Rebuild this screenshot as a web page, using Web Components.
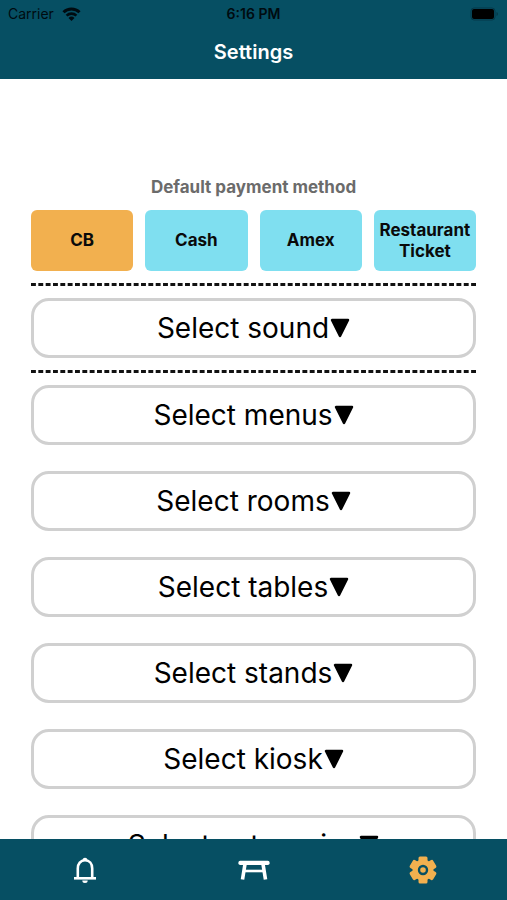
<!DOCTYPE html>
<html lang="en">
<head>
<meta charset="utf-8">
<meta name="viewport" content="width=device-width, initial-scale=1">
<title>Settings</title>
<style>
  html, body {
    height: 100%;
    margin: 0;
  }

  body {
    font-family: Inter, "Liberation Sans", sans-serif;
    color: #0a0a0a;
    background-color: #fff;
    --bar: #064f63;
    --accent: #f2b04f;
    --tile: #7fdff0;
  }
</style>
</head>
<body>
<settings-app></settings-app>

<script>
class StatusBar extends HTMLElement {
  constructor() {
    super();
    this.attachShadow({ mode: 'open' });
    this.shadowRoot.innerHTML = `
      <style>
        :host {
          display: grid;
          grid-template-columns: 1fr auto 1fr;
          align-items: center;
          height: 27px;
          padding: 0 8px;
          font-size: 14px;
          color: #000b10;
        }

        .carrier {
          display: flex;
          align-items: center;
          gap: 8px;
        }

        .time {
          font-weight: 600;
        }

        .battery {
          justify-self: end;
        }

        svg {
          display: block;
        }
      </style>
      <div class="carrier">
        <span>Carrier</span>
        <svg width="19" height="14" viewBox="0 0 19 14" fill="none" stroke="currentColor" stroke-width="3" aria-hidden="true">
          <path d="M1.5 5.2a11.3 11.3 0 0 1 16 0"/>
          <path d="M4.6 8.6a7 7 0 0 1 9.8 0" stroke-width="2.6"/>
          <path d="M9.5 14L6.5 11a4.3 4.3 0 0 1 6 0z" fill="currentColor" stroke="none"/>
        </svg>
      </div>
      <span class="time">6:16 PM</span>
      <svg class="battery" width="29" height="14" viewBox="0 0 29 14" aria-hidden="true">
        <rect x="1" y="1" width="24" height="12" rx="3" fill="none" stroke="#04394a" stroke-width="1"/>
        <rect x="2" y="2" width="22" height="10" rx="2" fill="#000"/>
        <path d="M26.5 5v4q1.5-.6 1.5-2t-1.5-2z" fill="#04394a"/>
      </svg>
    `;
  }
}

class PaymentOption extends HTMLElement {
  constructor() {
    super();
    this.attachShadow({ mode: 'open' });
    this.shadowRoot.innerHTML = `
      <style>
        :host {
          display: block;
        }

        button {
          width: 100%;
          height: 61px;
          padding: 0;
          border: 0;
          border-radius: 6px;
          background-color: var(--tile);
          color: inherit;
          font: 700 17px/21px Inter, "Liberation Sans", sans-serif;
          cursor: pointer;
        }

        :host([selected]) button {
          background-color: var(--accent);
        }
      </style>
      <button type="button"><slot></slot></button>
    `;
  }

  connectedCallback() {
    this.shadowRoot.querySelector('button').setAttribute('aria-pressed', this.hasAttribute('selected'));
  }
}

class DashedRule extends HTMLElement {
  constructor() {
    super();
    this.attachShadow({ mode: 'open' });
    // pathLength 182 = 61 dashes of 2 units with 60 gaps of 1
    this.shadowRoot.innerHTML = `
      <style>
        :host {
          display: block;
        }

        svg {
          display: block;
          width: 100%;
          height: 3px;
        }
      </style>
      <svg aria-hidden="true">
        <line x1="0" y1="1.5" x2="100%" y2="1.5" stroke="#111" stroke-width="3" pathLength="182" stroke-dasharray="2 1"/>
      </svg>
    `;
  }
}

class SelectField extends HTMLElement {
  constructor() {
    super();
    this.attachShadow({ mode: 'open' });
    this.shadowRoot.innerHTML = `
      <style>
        :host {
          display: block;
        }

        button {
          display: flex;
          align-items: center;
          justify-content: center;
          gap: 1px;
          box-sizing: border-box;
          width: 100%;
          height: 60px;
          padding: 0;
          border: 3px solid #d0d0d0;
          border-radius: 18px;
          background-color: #fff;
          color: #000;
          font: 400 28px/36px Inter, "Liberation Sans", sans-serif;
          cursor: pointer;
        }
      </style>
      <button type="button" aria-haspopup="listbox">
        <span><slot></slot></span>
        <svg width="20" height="20" viewBox="0 0 20 20" aria-hidden="true">
          <path d="M2 2h16l-8 16z" fill="currentColor" stroke="currentColor" stroke-width="2.5" stroke-linejoin="round"/>
        </svg>
      </button>
    `;
  }
}

class TabBar extends HTMLElement {
  constructor() {
    super();
    this.attachShadow({ mode: 'open' });
    this.shadowRoot.innerHTML = `
      <style>
        :host {
          display: block;
          background-color: var(--bar);
        }

        nav {
          display: grid;
          grid-template-columns: repeat(3, 1fr);
          height: 61px;
        }

        a {
          display: flex;
          align-items: center;
          justify-content: center;
          color: #fff;
        }

        a[aria-current] {
          color: var(--accent);
        }
      </style>
      <nav>
        <a href="#notifications" aria-label="Notifications">
          <svg width="24" height="28" viewBox="0 0 24 28" fill="none" stroke="currentColor" stroke-width="2.6">
            <path d="M4.8 22V12.5C4.800 7.5 7.5 4.3 12 4.3s7.2 3.2 7.2 8.2V22"/>
            <path d="M1 22.3h22"/>
            <path d="M9.5 4.2a2.500 2.5 0 0 1 5 0zM9.3 24.500h5.400a2.7 2.5 0 0 1-5.4 0z" fill="currentColor" stroke="none"/>
          </svg>
        </a>
        <a href="#tables" aria-label="Tables">
          <svg width="32" height="20" viewBox="0 0 32 20" fill="none" stroke="currentColor" stroke-width="3.6">
            <path d="M2.200 2.600h27.600v.6H2.200z" stroke-linejoin="round"/>
            <path d="M7 4L4.500 19.500M25 4l2.500 15.500"/>
            <path d="M6 11h20" stroke-width="2.6"/>
          </svg>
        </a>
        <a href="#settings" aria-label="Settings" aria-current="page">
          <svg width="28" height="28" viewBox="0 0 28 28">
            <g fill="currentColor">
              <circle cx="14" cy="14" r="10.500"/>
              <rect id="tooth" x="9.500" y="0.500" width="9" height="27" rx="1.500"/>
              <use href="#tooth" transform="rotate(60 14 14)"/>
              <use href="#tooth" transform="rotate(120 14 14)"/>
            </g>
            <circle cx="14" cy="14" r="4" fill="none" stroke="#064f63" stroke-width="2.400"/>
          </svg>
        </a>
      </nav>
    `;
  }
}

class SettingsApp extends HTMLElement {
  constructor() {
    super();
    this.attachShadow({ mode: 'open' });
    this.shadowRoot.innerHTML = `
      <style>
        :host {
          display: flex;
          flex-direction: column;
          height: 100vh;
        }

        header {
          flex: none;
          background-color: var(--bar);
        }

        h1 {
          margin: 0;
          padding: 12px 0 14px;
          font-size: 20px;
          line-height: 26px;
          font-weight: 600;
          text-align: center;
          color: #fff;
        }

        main {
          flex: 1;
          min-height: 0;
          overflow-y: auto;
          scrollbar-width: none;
          padding: 98px 31px 0;
        }

        h2 {
          margin: 0 0 12px;
          font-size: 17px;
          line-height: 21px;
          font-weight: 700;
          text-align: center;
          color: #6b6b6b;
        }

        .payments {
          display: grid;
          grid-template-columns: repeat(4, 1fr);
          gap: 12px;
        }

        dashed-rule {
          margin: 12px 0;
        }

        .fields {
          display: flex;
          flex-direction: column;
          gap: 26px;
          padding-bottom: 26px;
        }

        tab-bar {
          flex: none;
        }
      </style>
      <header>
        <status-bar></status-bar>
        <h1>Settings</h1>
      </header>
      <main>
        <h2>Default payment method</h2>
        <div class="payments">
          <payment-option selected>CB</payment-option>
          <payment-option>Cash</payment-option>
          <payment-option>Amex</payment-option>
          <payment-option>Restaurant Ticket</payment-option>
        </div>
        <dashed-rule></dashed-rule>
        <select-field>Select sound</select-field>
        <dashed-rule></dashed-rule>
        <div class="fields">
          <select-field>Select menus</select-field>
          <select-field>Select rooms</select-field>
          <select-field>Select tables</select-field>
          <select-field>Select stands</select-field>
          <select-field>Select kiosk</select-field>
          <select-field>Select categories</select-field>
        </div>
      </main>
      <tab-bar></tab-bar>
    `;
  }
}

customElements.define('status-bar', StatusBar);
customElements.define('payment-option', PaymentOption);
customElements.define('dashed-rule', DashedRule);
customElements.define('select-field', SelectField);
customElements.define('tab-bar', TabBar);
customElements.define('settings-app', SettingsApp);
</script>
</body>
</html>
